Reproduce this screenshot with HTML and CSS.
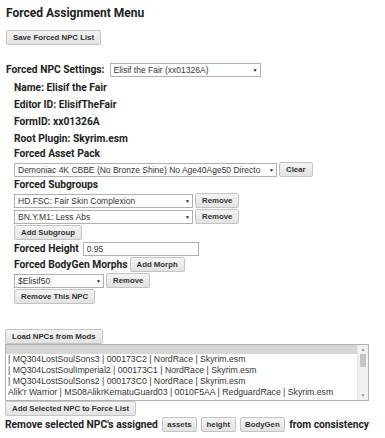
FILE: index.html
```html
<!DOCTYPE html>
<html lang="en">
<head>
    <meta charset="UTF-8">
    <title>Forced Assignment Menu</title>
    <link rel="stylesheet" href="styles.css">
</head>
<body>
    <h1 class="title">Forced Assignment Menu</h1>
    <button class="btn btn-block">Save Forced NPC List</button>

    <div class="npc-pick">
        <span class="label">Forced NPC Settings:</span>
        <span class="dd dd-npc"><select><option>Elisif the Fair (xx01326A)</option></select></span>
    </div>

    <div class="npc">
        <div class="info">Name: Elisif the Fair</div>
        <div class="info">Editor ID: ElisifTheFair</div>
        <div class="info">FormID: xx01326A</div>
        <div class="info">Root Plugin: Skyrim.esm</div>

        <div class="label head">Forced Asset Pack</div>
        <div class="row">
            <span class="dd dd-pack"><select><option>Demoniac 4K CBBE (No Bronze Shine) No Age40Age50 Directo</option></select></span>
            <button class="btn">Clear</button>
        </div>

        <div class="label head">Forced Subgroups</div>
        <div class="row">
            <span class="dd dd-sub"><select><option>HD.FSC: Fair Skin Complexion</option></select></span>
            <button class="btn">Remove</button>
        </div>
        <div class="row">
            <span class="dd dd-sub"><select><option>BN.Y.M1: Less Abs</option></select></span>
            <button class="btn">Remove</button>
        </div>
        <div class="row"><button class="btn">Add Subgroup</button></div>

        <div class="row">
            <span class="label">Forced Height</span>
            <input class="text-in" type="text" value="0.95">
        </div>
        <div class="row">
            <span class="label">Forced BodyGen Morphs</span>
            <button class="btn">Add Morph</button>
        </div>
        <div class="row">
            <span class="dd dd-morph"><select><option>$Elisif50</option></select></span>
            <button class="btn">Remove</button>
        </div>
        <div class="row"><button class="btn">Remove This NPC</button></div>
    </div>

    <div class="loader">
        <button class="btn btn-block">Load NPCs from Mods</button>
        <div class="listbox">
            <div class="list-rows">
                <div class="opt opt-sel"></div>
                <div class="opt">| MQ304LostSoulSons3 | 000173C2 | NordRace | Skyrim.esm</div>
                <div class="opt">| MQ304LostSoulImperial2 | 000173C1 | NordRace | Skyrim.esm</div>
                <div class="opt">| MQ304LostSoulSons2 | 000173C0 | NordRace | Skyrim.esm</div>
                <div class="opt">Alik'r Warrior | MS08AlikrKematuGuard03 | 0010F5AA | RedguardRace | Skyrim.esm</div>
            </div>
            <div class="scrollbar">
                <span class="arrow">&#9650;</span>
                <span class="thumb"></span>
                <span class="track"></span>
                <span class="arrow">&#9660;</span>
            </div>
        </div>
        <button class="btn btn-block">Add Selected NPC to Force List</button>
        <div class="consistency">
            <span class="label">Remove selected NPC's assigned</span>
            <button class="btn">assets</button>
            <button class="btn">height</button>
            <button class="btn">BodyGen</button>
            <span class="label">from consistency</span>
        </div>
    </div>
</body>
</html>
```

FILE: styles.css
```css
* {
    margin: 0;
    padding: 0;
    box-sizing: border-box;
}

body {
    font-family: Roboto, "Liberation Sans", Arial, sans-serif;
    font-size: 10.25px;
    line-height: 15px;
    background: #fff;
    color: #222;
    padding: 5px 6px;
}

.title {
    font-size: 12px;
    font-weight: 700;
    line-height: 16px;
    margin-bottom: 9px;
}

.label,
.info {
    font-size: 10.25px;
    font-weight: 700;
    line-height: 15px;
    white-space: nowrap;
}

.info {
    line-height: 17px;
}

.head {
    line-height: 14px;
}

.btn {
    display: inline-block;
    font-family: "Liberation Sans", Arial, sans-serif;
    font-size: 7.8px;
    font-weight: 700;
    color: #333;
    background: linear-gradient(#f4f4f4, #e2e2e2);
    border: 1px solid #c4c4c4;
    border-radius: 2px;
    height: 15px;
    padding: 0 6px;
    white-space: nowrap;
}

.btn-block {
    display: block;
}

.npc-pick {
    display: flex;
    align-items: center;
    gap: 5px;
    height: 15px;
    margin-top: 17px;
}

.dd {
    position: relative;
    display: inline-flex;
    height: 14px;
}

.dd select {
    appearance: none;
    -webkit-appearance: none;
    width: 100%;
    height: 14px;
    font-family: "Liberation Sans", Arial, sans-serif;
    font-size: 8.5px;
    color: #333;
    background: #fff;
    border: 1px solid #b0b0b0;
    border-radius: 0;
    padding: 0 10px 0 3px;
}

.dd::after {
    content: "\25BC";
    position: absolute;
    right: 3px;
    top: 4px;
    font-size: 5px;
    line-height: 6px;
    color: #222;
    pointer-events: none;
}

.dd-npc { width: 151px; }
.dd-pack { width: 263px; }
.dd-sub { width: 179px; }
.dd-morph { width: 90px; }

.npc {
    padding-left: 8px;
    margin-top: 2px;
}

.row {
    display: flex;
    align-items: center;
    gap: 2px;
    height: 15px;
    margin-bottom: 1px;
}

.head + .row {
    margin-top: 1px;
}

.text-in {
    font-family: "Liberation Sans", Arial, sans-serif;
    font-size: 8.5px;
    color: #333;
    width: 116px;
    height: 14px;
    border: 1px solid #b0b0b0;
    padding: 0 3px;
    margin-left: 2px;
}

.loader {
    margin-top: 25px;
    margin-left: -1px;
}

.listbox {
    display: flex;
    width: 364px;
    height: 57px;
    border: 1px solid #b0b0b0;
    overflow: hidden;
}

.list-rows {
    flex: 1;
    font-family: "Liberation Sans", Arial, sans-serif;
    font-size: 8.7px;
    color: #333;
}

.opt {
    height: 11px;
    line-height: 11px;
    padding-left: 2px;
    white-space: nowrap;
}

.opt-sel {
    background: #d6d6d6;
    height: 9px;
}

.scrollbar {
    width: 11px;
    display: flex;
    flex-direction: column;
    background: #f1f1f1;
    border-left: 1px solid #e6e6e6;
}

.arrow {
    font-size: 5px;
    color: #999;
    text-align: center;
    height: 9px;
    line-height: 9px;
}

.thumb {
    height: 13px;
    margin: 0 2px;
    background: #c6c6c6;
}

.track {
    flex: 1;
}

.consistency {
    display: flex;
    align-items: center;
    gap: 4px;
    height: 16px;
}

.consistency .btn {
    padding: 0 4.5px;
}
```
